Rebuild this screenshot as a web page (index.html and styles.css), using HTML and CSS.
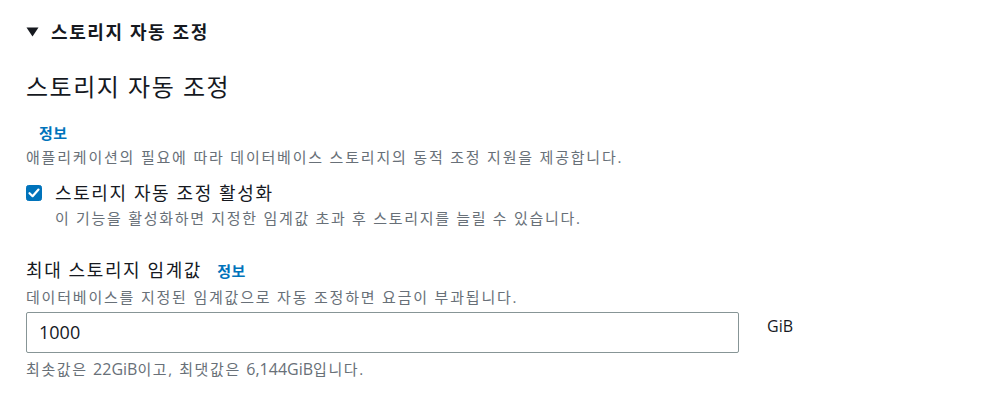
FILE: index.html
```html
<!DOCTYPE html>
<html lang="ko">
<head>
<meta charset="utf-8">
<link rel="stylesheet" href="styles.css">
</head>
<body>
<div class="page">
  <div class="expander">
    <svg class="caret" width="13" height="10" viewBox="0 0 13 10"><path d="M0.5 0.5 L12.5 0.5 L6.5 9.5 Z" fill="#16191f"/></svg>
    <span class="expander-title">스토리지 자동 조정</span>
  </div>
  <div class="section">
    <h2 class="heading">스토리지 자동 조정</h2>
    <div class="info-row"><a class="info">정보</a></div>
    <div class="desc">애플리케이션의 필요에 따라 데이터베이스 스토리지의 동적 조정 지원을 제공합니다.</div>
    <div class="check-row">
      <span class="checkbox"><svg width="16" height="16" viewBox="0 0 16 16"><rect x="0.5" y="0.5" width="15" height="15" rx="2" fill="#0073bb" stroke="#0073bb"/><path d="M3.5 8.2 L6.6 11.2 L12.5 4.6" fill="none" stroke="#fff" stroke-width="2.2" stroke-linecap="round" stroke-linejoin="round"/></svg></span>
      <div class="check-text">
        <div class="check-label">스토리지 자동 조정 활성화</div>
        <div class="check-desc">이 기능을 활성화하면 지정한 임계값 초과 후 스토리지를 늘릴 수 있습니다.</div>
      </div>
    </div>
    <div class="field">
      <div class="field-label">최대 스토리지 임계값 <a class="info">정보</a></div>
      <div class="field-desc">데이터베이스를 지정된 임계값으로 자동 조정하면 요금이 부과됩니다.</div>
      <div class="input-row">
        <div class="input">1000</div>
        <span class="unit">GiB</span>
      </div>
      <div class="field-hint">최솟값은 <span class="latin">22GiB</span>이고, 최댓값은 <span class="latin">6,144GiB</span>입니다.</div>
    </div>
  </div>
</div>
</body>
</html>
```
FILE: styles.css
```css
html, body {
  margin: 0;
  padding: 0;
  background: #ffffff;
}
body {
  font-family: "Open Sans", "Noto Sans CJK KR", sans-serif;
  color: #16191f;
}
.page {
  padding: 21px 0 0 26px;
}
.expander {
  display: flex;
  align-items: center;
  gap: 12px;
  height: 22px;
}
.caret {
  display: block;
}
.expander-title {
  font-size: 18px;
  line-height: 22px;
  font-weight: 700;
  letter-spacing: 1.6px;
}
.section {
  padding-top: 29px;
}
.heading {
  margin: 0;
  font-size: 24px;
  font-weight: 400;
  line-height: 30px;
  letter-spacing: 1.5px;
}
.info-row {
  padding: 22px 0 0 13px;
  line-height: 18px;
}
.info {
  color: #0073bb;
  font-size: 15px;
  font-weight: 700;
  letter-spacing: 0.5px;
}
.desc, .check-desc, .field-desc, .field-hint {
  font-size: 15px;
  color: #687078;
  line-height: 20px;
  letter-spacing: 1.8px;
}
.desc {
  margin-top: 5px;
}
.check-row {
  display: flex;
  gap: 13px;
  margin-top: 14px;
}
.checkbox {
  padding-top: 4px;
}
.checkbox svg {
  display: block;
}
.check-label {
  font-size: 18px;
  line-height: 24px;
  letter-spacing: 1.6px;
}
.check-desc {
  margin-top: 3px;
  letter-spacing: 1.7px;
}
.field {
  margin-top: 30px;
}
.field-label {
  font-size: 18px;
  line-height: 24px;
  letter-spacing: 1.6px;
}
.field-label .info {
  margin-left: 9px;
}
.field-desc {
  margin-top: 4px;
}
.input-row {
  display: flex;
  align-items: flex-start;
  gap: 28px;
  margin-top: 5px;
}
.input {
  box-sizing: border-box;
  width: 713px;
  height: 41px;
  border: 1px solid #879596;
  border-radius: 2px;
  padding: 0 12px;
  font-size: 18px;
  line-height: 39px;
}
.unit {
  font-size: 16px;
  line-height: 28px;
}
.field-hint {
  margin-top: 6px;
  letter-spacing: 1.6px;
}
.field-hint .latin {
  font-size: 16px;
  letter-spacing: 0;
}
```
